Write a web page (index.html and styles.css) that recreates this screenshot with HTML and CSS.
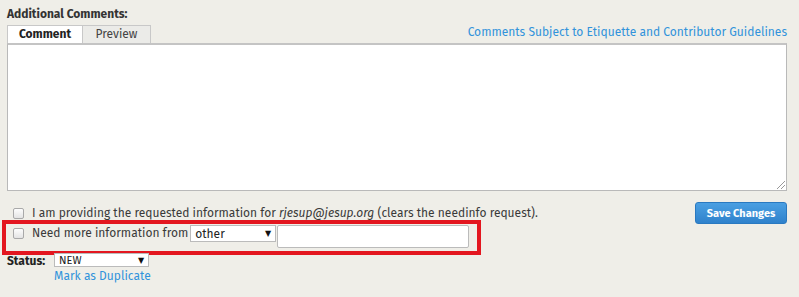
FILE: index.html
```html
<!DOCTYPE html>
<html lang="en">
<head>
    <meta charset="UTF-8">
    <title>Additional Comments</title>
    <link rel="stylesheet" href="styles.css">
</head>
<body>
    <div class="comment-form">
        <div class="section-label">Additional Comments:</div>
        <div class="tab-bar">
            <div class="tabs">
                <span class="tab active">Comment</span>
                <span class="tab">Preview</span>
            </div>
            <a class="guidelines" href="#">Comments Subject to Etiquette and Contributor Guidelines</a>
        </div>
        <div class="comment-box">
            <span class="resize-grip"></span>
        </div>

        <div class="footer">
            <div class="flags">
                <div class="flag-row">
                    <span class="checkbox"></span>
                    <span>I am providing the requested information for <em>rjesup@jesup.org</em> (clears the needinfo request).</span>
                </div>
                <div class="flag-row needinfo">
                    <span class="checkbox"></span>
                    <span class="needinfo-text">Need more information from</span>
                    <span class="select select-other">other<span class="arrow">&#9660;</span></span>
                    <span class="text-input"></span>
                </div>
            </div>
            <button class="save-btn">Save Changes</button>
        </div>

        <div class="status-row">
            <span class="status-label">Status:</span>
            <div class="status-fields">
                <span class="select select-status">NEW<span class="arrow">&#9660;</span></span>
                <a class="dup-link" href="#">Mark as Duplicate</a>
            </div>
        </div>
    </div>
</body>
</html>
```

FILE: styles.css
```css
body {
    margin: 0;
    background-color: #efeee8;
    font-family: "Fira Sans", "Open Sans", "DejaVu Sans", sans-serif;
    font-size: 12px;
    color: #333;
}
.comment-form {
    padding: 6px 12px 0 7px;
}
.section-label {
    font-weight: bold;
    line-height: 16px;
    height: 19px;
}
.tab-bar {
    display: flex;
    justify-content: space-between;
    align-items: center;
}
.tabs {
    display: flex;
}
.tab {
    box-sizing: border-box;
    height: 18px;
    line-height: 16px;
    border: 1px solid #c8c8c8;
    border-bottom: none;
    background-color: #ebebe8;
    text-align: center;
    color: #444;
}
.tab:first-child {
    width: 76px;
}
.tab + .tab {
    width: 68px;
    border-left: none;
}
.tab.active {
    background-color: #fff;
    font-weight: bold;
    color: #222;
}
.guidelines {
    font-size: 12px;
    color: #3193db;
    text-decoration: none;
    margin-bottom: 4px;
}
.comment-box {
    position: relative;
    box-sizing: border-box;
    height: 148px;
    background-color: #fff;
    border: 1px solid #b9b9b9;
    border-top: 2px solid #c4c4c4;
}
.resize-grip {
    position: absolute;
    right: 1px;
    bottom: 1px;
    width: 8px;
    height: 8px;
    background: linear-gradient(135deg, transparent 45%, #999 45%, #999 55%, transparent 55%, transparent 70%, #999 70%, #999 80%, transparent 80%);
}
.footer {
    display: flex;
    justify-content: space-between;
    align-items: flex-start;
    margin-top: 12px;
}
.flags {
    margin-left: -5px;
}
.flag-row {
    display: flex;
    align-items: center;
    height: 20px;
    padding-left: 11px;
    color: #3a3a3a;
}
.checkbox {
    box-sizing: border-box;
    width: 11px;
    height: 11px;
    border: 1px solid #a9a9a9;
    border-radius: 2px;
    background: linear-gradient(#fdfdfd, #e4e4e4);
    margin-right: 8px;
}
.needinfo {
    box-sizing: border-box;
    align-items: flex-start;
    width: 479px;
    height: 35px;
    border: 4px solid #e3161f;
    padding: 1px 0 0 7px;
    margin-top: -3px;
}
.needinfo .checkbox {
    margin-top: 3px;
}
.needinfo-text {
    line-height: 17px;
}
.select {
    box-sizing: border-box;
    display: inline-flex;
    justify-content: space-between;
    align-items: center;
    background-color: #fff;
    border: 1px solid #bbb;
    color: #222;
    padding: 0 4px 0 4px;
}
.arrow {
    font-size: 8px;
    color: #111;
}
.select-other {
    width: 86px;
    height: 17px;
    margin-left: 2px;
}
.text-input {
    box-sizing: border-box;
    width: 192px;
    height: 23px;
    margin-left: 1px;
    background-color: #fff;
    border: 1px solid #bbb;
    border-radius: 2px;
}
.save-btn {
    box-sizing: border-box;
    width: 92px;
    height: 22px;
    margin-top: -1px;
    border: 1px solid #2a79c0;
    border-radius: 3px;
    background: linear-gradient(#4a9fe2, #2f82cc);
    color: #fff;
    font-family: inherit;
    font-size: 11px;
    font-weight: bold;
}
.status-row {
    display: flex;
    gap: 9px;
    margin-top: -2px;
}
.status-label {
    font-weight: bold;
    color: #222;
    padding-top: 1px;
}
.status-fields {
    display: flex;
    flex-direction: column;
}
.select-status {
    width: 95px;
    height: 14px;
    font-size: 11px;
}
.dup-link {
    color: #3193db;
    text-decoration: none;
    margin-top: 2px;
}
```
